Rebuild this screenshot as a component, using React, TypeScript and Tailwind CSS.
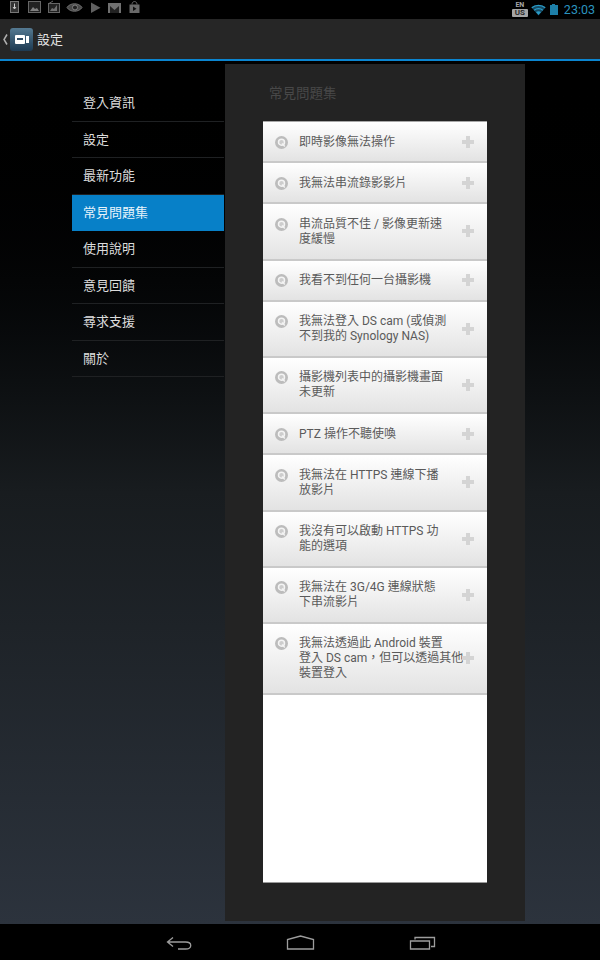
const font = { fontFamily: '"Roboto", "Noto Sans CJK TC", sans-serif' }

const menu = ['登入資訊', '設定', '最新功能', '常見問題集', '使用說明', '意見回饋', '尋求支援', '關於']

const faqs = [
  ['即時影像無法操作'],
  ['我無法串流錄影影片'],
  ['串流品質不佳 / 影像更新速', '度緩慢'],
  ['我看不到任何一台攝影機'],
  ['我無法登入 DS cam (或偵測', '不到我的 Synology NAS)'],
  ['攝影機列表中的攝影機畫面', '未更新'],
  ['PTZ 操作不聽使喚'],
  ['我無法在 HTTPS 連線下播', '放影片'],
  ['我沒有可以啟動 HTTPS 功', '能的選項'],
  ['我無法在 3G/4G 連線狀態', '下串流影片'],
  ['我無法透過此 Android 裝置', '登入 DS cam，但可以透過其他', '裝置登入'],
]

function StatusLeft() {
  return (
    <div className="flex items-center">
      <svg width="150" height="19" viewBox="0 0 150 19" fill="none">
        <rect x="10.500" y="1.500" width="8" height="11" fill="#333" stroke="#777" />
        <path d="M14.500 3.500v5M13 7l1.500 2 1.500-2" stroke="#ccc" />
        <rect x="28.500" y="1.500" width="12" height="11" fill="#222" stroke="#666" />
        <path d="M30 11l3-4 2 2 2-1 2 3z" fill="#808080" />
        <rect x="48.500" y="3.500" width="11" height="9" fill="#222" stroke="#666" />
        <path d="M50 11l2-3 2 1 3-4v6z" fill="#707070" />
        <path d="M48 4l5-3" stroke="#666" />
        <path d="M67 7.500c3-5 12-5 15 0-3 5-12 5-15 0z" fill="#4a4a4a" stroke="#6f6f6f" />
        <circle cx="75" cy="7.500" r="2.500" fill="#222" stroke="#808080" />
        <path d="M91 2.500v10.500l9.500-5.200z" fill="#606060" />
        <rect x="108" y="3" width="13" height="10" fill="#707070" />
        <path d="M110 13V6l4.500 4 4.500-4v7z" fill="#222" />
        <path d="M129.500 4.500h10v8.500h-10z" fill="#6a6a6a" />
        <path d="M132 4.500c0-4 5-4 5 0" stroke="#6a6a6a" />
        <path d="M133 6.500v4.500l3.500-2.200z" fill="#111" />
      </svg>
    </div>
  )
}

function StatusRight() {
  return (
    <div className="flex items-center">
      <div className="flex flex-col items-center w-[16px] mr-[3px]">
        <span className="text-[7px] leading-[7px] font-bold text-[#a5a5a5]">EN</span>
        <span className="text-[8px] leading-[8px] font-bold text-[#2a2a2a] bg-[#a5a5a5] rounded-[1px] w-full text-center">US</span>
      </div>
      <svg width="15" height="12" viewBox="0 0 15 12" fill="none" className="mr-[4px]">
        <path d="M0.500 3.500C4 0.300 11 0.300 14.500 3.500L7.500 11.500z" fill="#154a63" />
        <path d="M0.800 3.700C4.500 0.500 10.500 0.500 14.200 3.700M3.200 6.200C5.500 4.200 9.500 4.200 11.800 6.200" stroke="#2a9bc7" strokeWidth="1.200" />
        <path d="M5 8C6.500 7 8.500 7 10 8L7.500 11z" fill="#2a9bc7" />
      </svg>
      <div className="flex flex-col items-center mr-[6px]">
        <div className="w-[3px] h-[1px] bg-[#1d7fa8]" />
        <div className="w-[8px] h-[10px] bg-[#1d7fa8]" />
      </div>
      <span className="text-[12.500px] leading-[19px] text-[#2a93bf] mr-[5px]">23:03</span>
    </div>
  )
}

function CameraLogo() {
  return (
    <div className="w-[23px] h-[23px] rounded-[3px] bg-gradient-to-b from-[#557a92] to-[#1d3a52] flex items-center justify-center gap-[1px]">
      <div className="w-[10px] h-[9px] rounded-[1px] bg-white flex items-center justify-center">
        <div className="w-[6px] h-[2px] bg-[#2d4c64]" />
      </div>
      <div className="w-[3px] h-[7px] bg-white" />
    </div>
  )
}

function QBadge() {
  return (
    <svg width="13" height="13" viewBox="0 0 13 13" fill="none" className="shrink-0 mt-[1px]">
      <circle cx="6.500" cy="6.500" r="6.500" fill="#bcbcbc" />
      <circle cx="6.500" cy="6.200" r="3" stroke="#f4f4f4" strokeWidth="1.500" fill="#cdcdcd" />
      <path d="M7 7.500l2.800 3" stroke="#f4f4f4" strokeWidth="1.400" />
    </svg>
  )
}

function FaqRow({ lines }: { lines: string[] }) {
  return (
    <div className="relative flex pl-[12px] pt-[12.500px] pb-[11.700px] bg-gradient-to-b from-white to-[#e3e3e3] border-b-2 border-[#c9c9c9]">
      <QBadge />
      <div className="ml-[11px] text-[12px] leading-[15px] text-[#5a5a5a] whitespace-nowrap">
        {lines.map((l) => (
          <div key={l}>{l}</div>
        ))}
      </div>
      <div className="absolute right-[13px] top-1/2 -translate-y-1/2 w-[12px] h-[12px]">
        <div className="absolute left-0 top-[4px] w-[12px] h-[4px] bg-[#d4d4d4]" />
        <div className="absolute left-[4px] top-0 w-[4px] h-[12px] bg-[#d4d4d4]" />
      </div>
    </div>
  )
}

export default function App() {
  return (
    <div className="w-[600px] h-[960px] flex flex-col bg-black overflow-hidden" style={font}>
      <div className="h-[19px] flex justify-between bg-black">
        <StatusLeft />
        <StatusRight />
      </div>

      <div className="h-[42px] bg-[#262626] border-b-2 border-[#0b85d0] flex items-center pl-[3px]">
        <svg width="5" height="11" viewBox="0 0 5 11" fill="none" className="mr-[2px]">
          <path d="M4 0.500L1 5.500l3 5" stroke="#b0b0b0" strokeWidth="1.500" />
        </svg>
        <CameraLogo />
        <span className="ml-[4px] text-[13px] leading-[20px] pt-[1px] text-[#e4e4e4]">設定</span>
      </div>

      <div className="flex-1 flex bg-gradient-to-b from-black via-[#181c1f] to-[#2c333d] pl-[72px]">
        <div className="w-[152px] mr-[1px] pt-[24px]">
          {menu.map((m) => (
            <div
              key={m}
              className={
                m === '常見問題集'
                  ? 'h-[36.500px] flex items-center pl-[11px] text-[13px] text-[#e8f4fb] bg-[#0780c8]'
                  : 'h-[36.500px] flex items-center pl-[11px] text-[13px] text-[#dcdcdc] border-b border-[#1f2123]'
              }
            >
              {m}
            </div>
          ))}
        </div>

        <div className="w-[300px] h-[857px] mt-[3px] bg-[#232323] pl-[38px] flex flex-col">
          <div className="h-[57px] pt-[20px] pl-[6px] text-[13.500px] leading-[18px] text-[#484848]">常見問題集</div>
          <div className="w-[224px] h-[762px] bg-white border-t border-b border-t-[#a8a8a8] border-b-[#999]">
            {faqs.map((lines) => (
              <FaqRow key={lines[0]} lines={lines} />
            ))}
          </div>
        </div>
      </div>

      <div className="h-[36px] bg-black flex items-start">
        <svg width="600" height="36" viewBox="0 0 600 36" fill="none" stroke="#9d9d9d" strokeWidth="1.300">
          <path d="M173 13.500L167.500 18l5.500 4.500M168 18h17.500c7 0 7 7 0 7H178" />
          <path d="M287.500 25V15.500L300.500 12l13 3.500V25z" />
          <path d="M410.500 17h19v8h-19z" />
          <path d="M415 15.500v-2h19.500v9H431" />
        </svg>
      </div>
    </div>
  )
}
